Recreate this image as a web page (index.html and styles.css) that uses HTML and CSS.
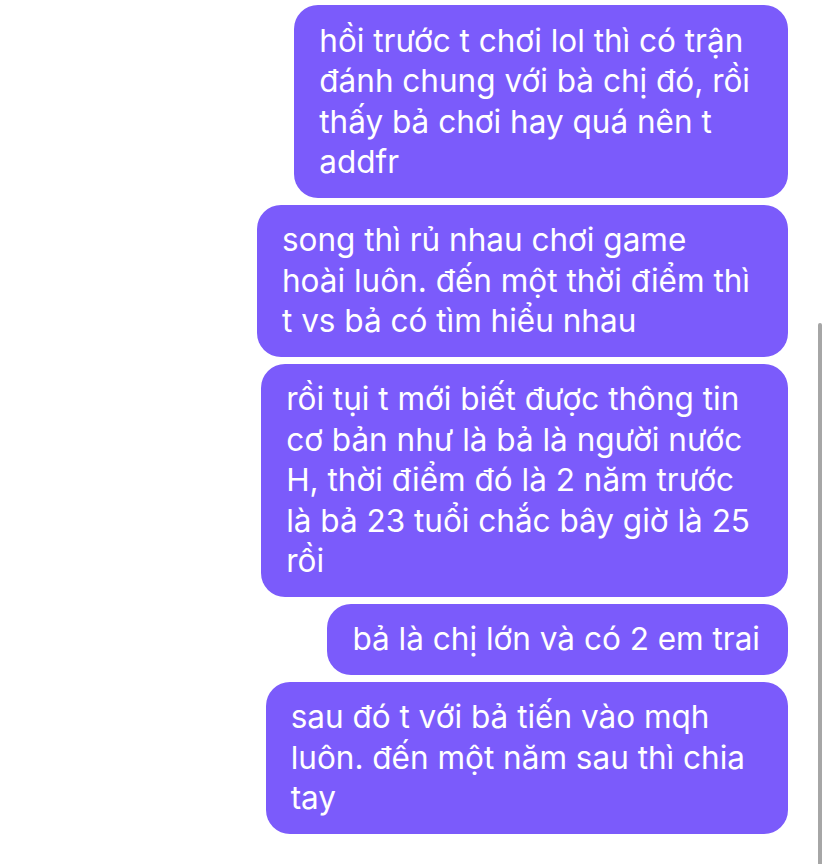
FILE: index.html
```html
<!DOCTYPE html>
<html lang="vi">
<head>
    <meta charset="UTF-8">
    <title>Tin nhắn</title>
    <link rel="stylesheet" href="styles.css">
</head>
<body>
<div class="chat">
    <div class="bubble">hồi trước t chơi lol thì có trận<br>đánh chung với bà chị đó, rồi<br>thấy bả chơi hay quá nên t<br>addfr</div>
    <div class="bubble">song thì rủ nhau chơi game<br>hoài luôn. đến một thời điểm thì<br>t vs bả có tìm hiểu nhau</div>
    <div class="bubble">rồi tụi t mới biết được thông tin<br>cơ bản như là bả là người nước<br>H, thời điểm đó là 2 năm trước<br>là bả 23 tuổi chắc bây giờ là 25<br>rồi</div>
    <div class="bubble single">bả là chị lớn và có 2 em trai</div>
    <div class="bubble wide">sau đó t với bả tiến vào mqh<br>luôn. đến một năm sau thì chia<br>tay</div>
</div>
<div class="scrollbar"></div>
</body>
</html>
```

FILE: styles.css
```css
body {
    margin: 0;
    background: #ffffff;
    font-family: Inter, "Noto Sans", sans-serif;
    overflow: hidden;
}

.chat {
    display: flex;
    flex-direction: column;
    align-items: flex-end;
    gap: 6.5px;
    padding: 5px 40px 0 0;
}

.bubble {
    background: #7b5bfb;
    color: #ffffff;
    font-size: 31.5px;
    line-height: 40.5px;
    padding: 15.5px 38px 15.5px 25px;
    border-radius: 24px;
    white-space: nowrap;
}

.bubble.single {
    padding-right: 28px;
}

.bubble.wide {
    padding-right: 43px;
}

.scrollbar {
    position: absolute;
    left: 818px;
    top: 323px;
    width: 4px;
    height: 560px;
    border-radius: 2px;
    background: #a6a6a6;
}
```
